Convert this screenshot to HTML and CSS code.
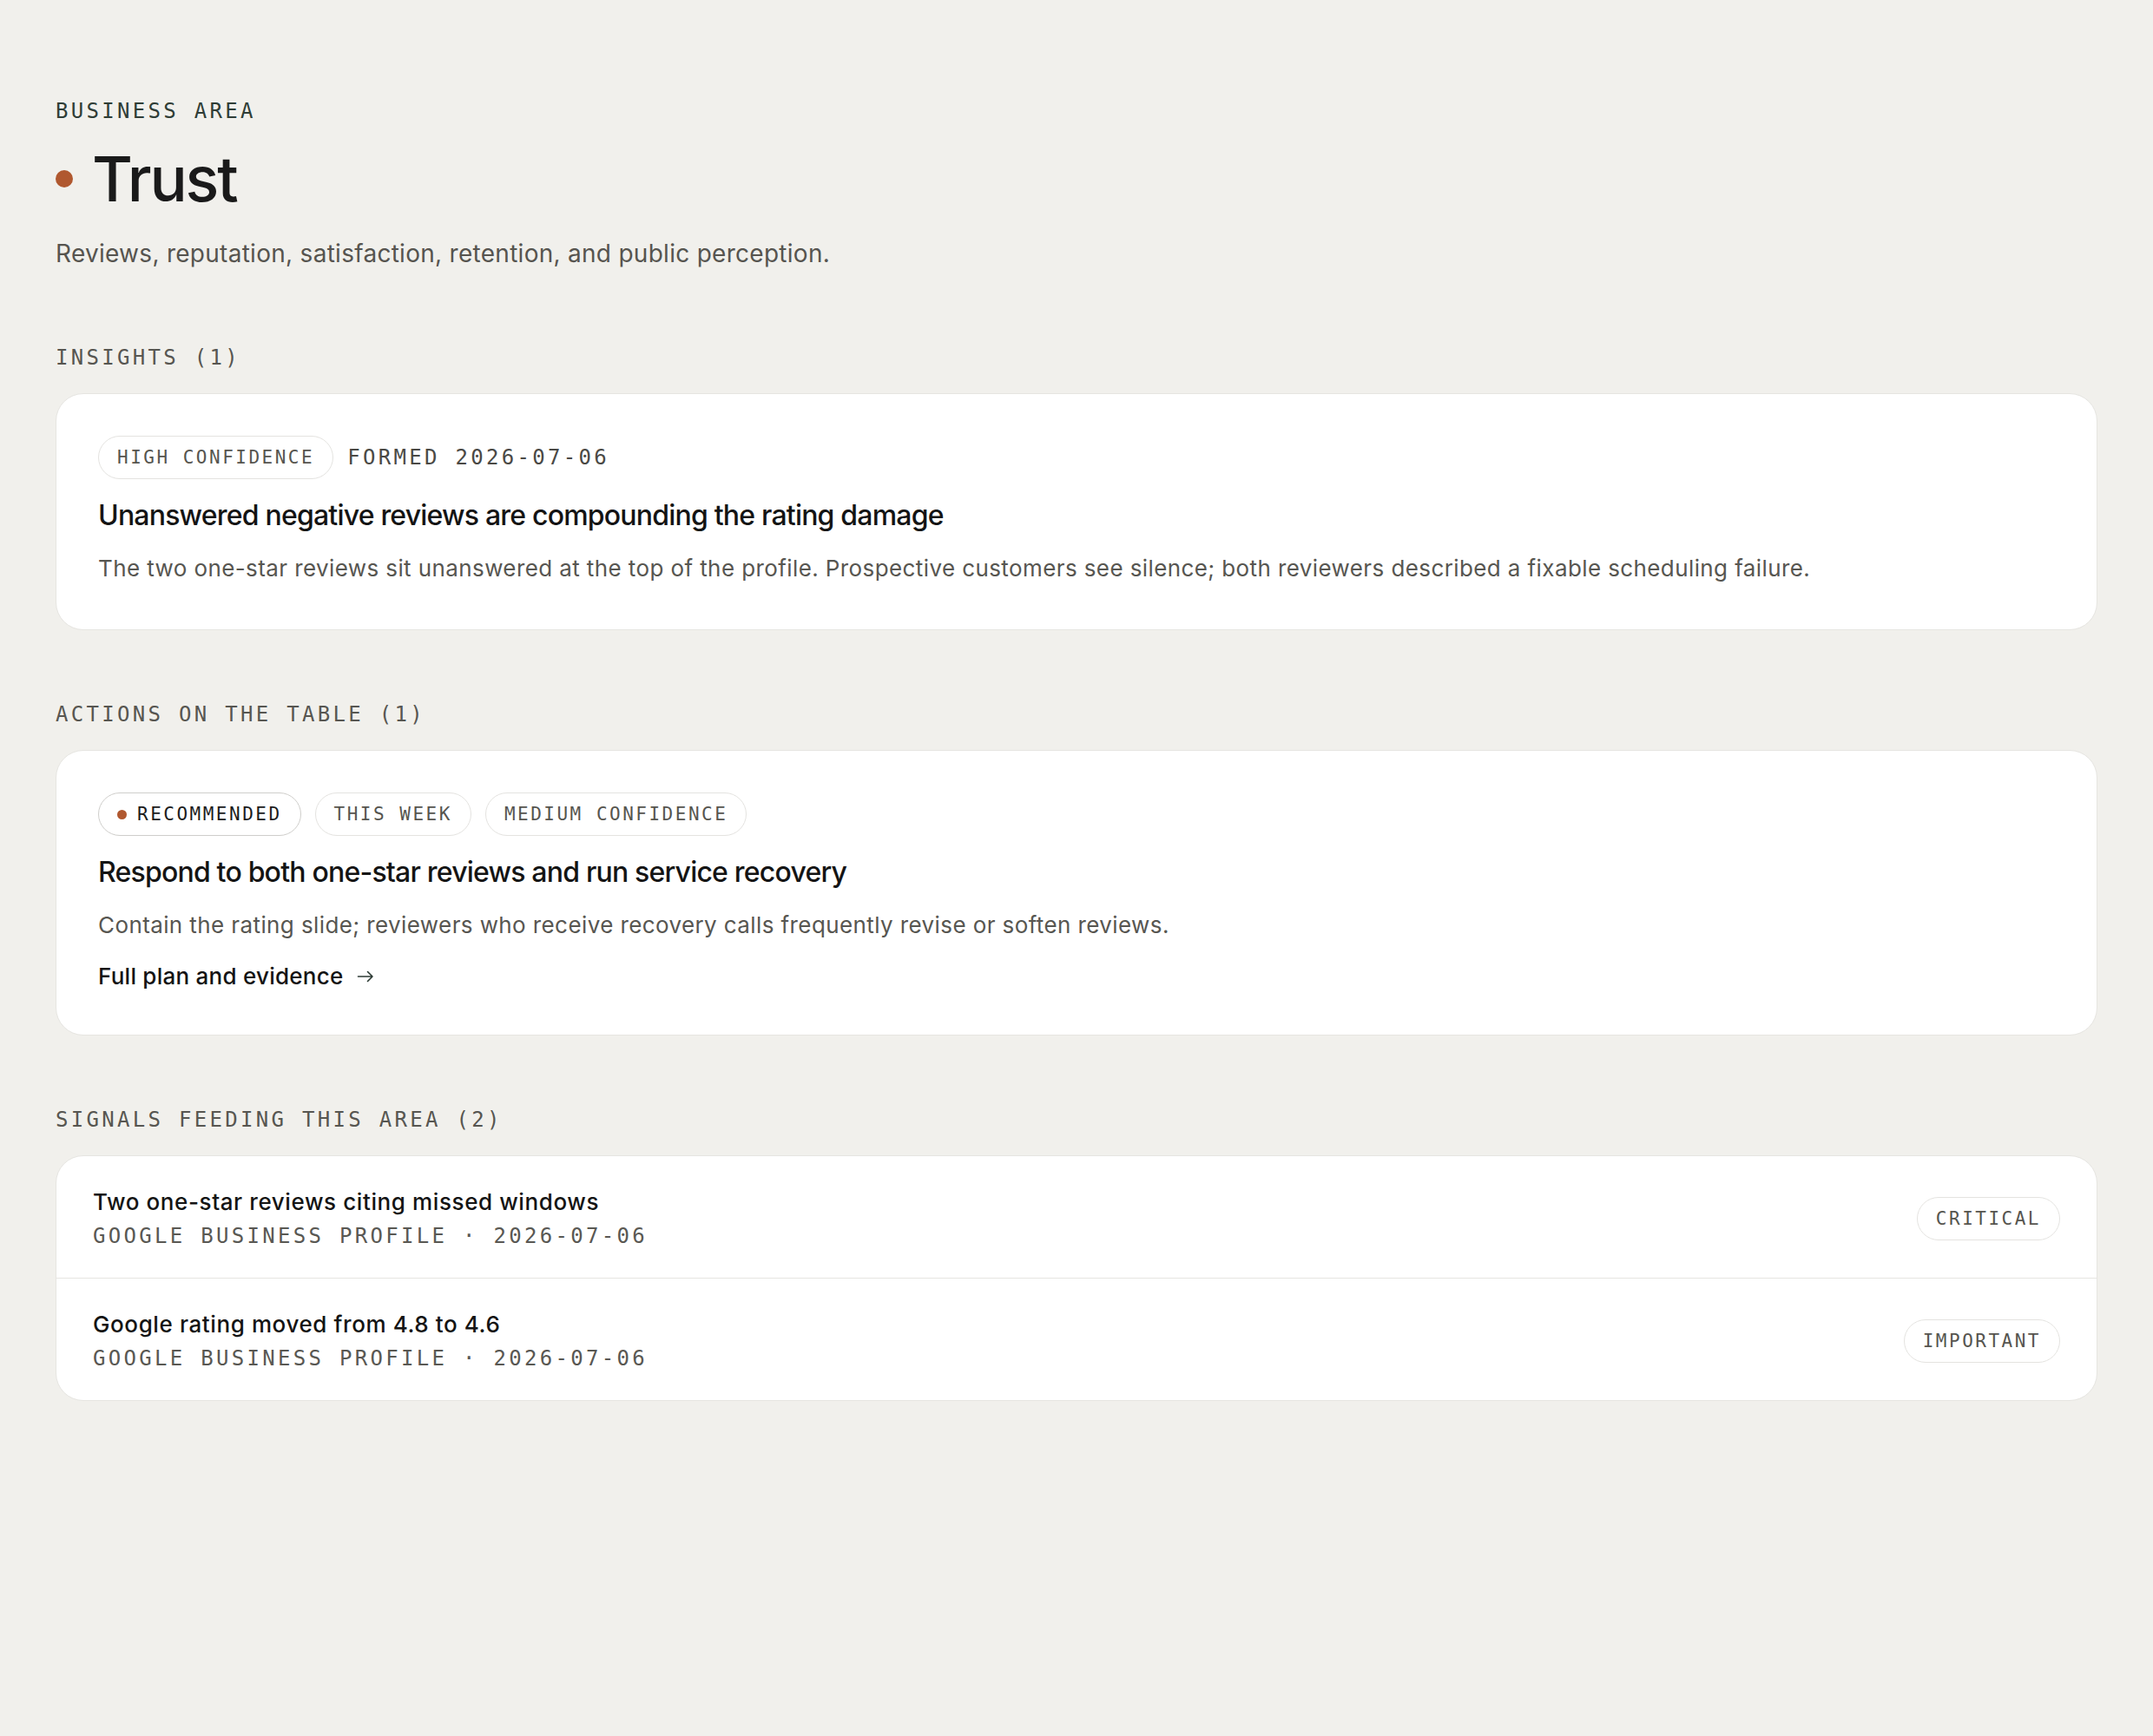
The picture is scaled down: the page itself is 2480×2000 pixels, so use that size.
FILE: index.html
```html
<!DOCTYPE html>
<html lang="en">
<head>
<meta charset="utf-8">
<title>Trust — Business Area</title>
<link rel="stylesheet" href="styles.css">
</head>
<body>
<main class="page">
  <header class="area-head">
    <div class="eyebrow">BUSINESS AREA</div>
    <h1 class="area-title"><span class="area-dot"></span>Trust</h1>
    <p class="area-desc">Reviews, reputation, satisfaction, retention, and public perception.</p>
  </header>

  <section class="section">
    <h2 class="section-label">INSIGHTS (1)</h2>
    <article class="card">
      <div class="chips">
        <span class="chip">HIGH CONFIDENCE</span>
        <span class="formed">FORMED 2026-07-06</span>
      </div>
      <h3 class="card-title">Unanswered negative reviews are compounding the rating damage</h3>
      <p class="card-body">The two one-star reviews sit unanswered at the top of the profile. Prospective customers see silence; both reviewers described a fixable scheduling failure.</p>
    </article>
  </section>

  <section class="section">
    <h2 class="section-label">ACTIONS ON THE TABLE (1)</h2>
    <article class="card">
      <div class="chips">
        <span class="chip chip-rec"><span class="chip-dot"></span>RECOMMENDED</span>
        <span class="chip">THIS WEEK</span>
        <span class="chip">MEDIUM CONFIDENCE</span>
      </div>
      <h3 class="card-title">Respond to both one-star reviews and run service recovery</h3>
      <p class="card-body">Contain the rating slide; reviewers who receive recovery calls frequently revise or soften reviews.</p>
      <a class="card-link" href="#">Full plan and evidence
        <svg class="arrow" width="20" height="20" viewBox="0 0 20 20" aria-hidden="true"><path d="M1.5 10h16.5M12.5 4.5l5.5 5.5-5.5 5.5" fill="none" stroke="currentColor" stroke-width="1.6" stroke-linecap="round" stroke-linejoin="round"/></svg>
      </a>
    </article>
  </section>

  <section class="section">
    <h2 class="section-label">SIGNALS FEEDING THIS AREA (2)</h2>
    <div class="card card-list">
      <div class="signal-row">
        <div class="signal-text">
          <div class="signal-title">Two one-star reviews citing missed windows</div>
          <div class="signal-meta">GOOGLE BUSINESS PROFILE · 2026-07-06</div>
        </div>
        <span class="chip">CRITICAL</span>
      </div>
      <div class="signal-row">
        <div class="signal-text">
          <div class="signal-title">Google rating moved from 4.8 to 4.6</div>
          <div class="signal-meta">GOOGLE BUSINESS PROFILE · 2026-07-06</div>
        </div>
        <span class="chip">IMPORTANT</span>
      </div>
    </div>
  </section>
</main>
</body>
</html>
```

FILE: styles.css
```css
* { box-sizing: border-box; }

html, body {
  margin: 0;
  padding: 0;
  background: #f1f0ec;
}

body {
  font-family: Inter, "Noto Sans", "Liberation Sans", sans-serif;
  color: #161616;
}

.page {
  padding: 112px 64px 64px;
}

.eyebrow,
.section-label,
.formed,
.signal-meta {
  font-family: "DejaVu Sans Mono", "Liberation Mono", monospace;
  font-size: 24px;
  line-height: 32px;
  letter-spacing: 3.3px;
  font-weight: 400;
}

.eyebrow {
  color: #2f3d36;
}

.area-title {
  margin: 22px 0 0;
  display: flex;
  align-items: center;
  gap: 22px;
  font-size: 72px;
  line-height: 80px;
  font-weight: 500;
  letter-spacing: -0.03em;
  color: #1a1a1a;
}

.area-dot {
  width: 20px;
  height: 20px;
  border-radius: 50%;
  background: #b0582f;
  flex: none;
}

.area-desc {
  margin: 26px 0 0;
  font-size: 28px;
  line-height: 40px;
  letter-spacing: 0.28px;
  color: #56544f;
}

.area-head {
  padding-bottom: 3px;
}

.section {
  margin-top: 81px;
}

.section-label {
  margin: 0 0 25px;
  color: #575651;
}

.card {
  background: #ffffff;
  border: 1px solid #e6e5e1;
  border-radius: 32px;
  padding: 48px;
}

.chips {
  display: flex;
  align-items: center;
  gap: 16px;
}

.chip {
  display: inline-flex;
  align-items: center;
  gap: 12px;
  height: 50px;
  padding: 0 21px;
  border: 1px solid #e4e3e0;
  border-radius: 999px;
  font-family: "DejaVu Sans Mono", "Liberation Mono", monospace;
  font-size: 21px;
  line-height: 24px;
  letter-spacing: 2.5px;
  color: #56554f;
  white-space: nowrap;
}

.chip-rec {
  border-color: #cfcecb;
  color: #1c1c1c;
}

.chip-dot {
  width: 11px;
  height: 11px;
  border-radius: 50%;
  background: #b0582f;
  flex: none;
}

.formed {
  color: #4a4945;
}

.card-title {
  margin: 22px 0 0;
  font-size: 32px;
  line-height: 40px;
  font-weight: 500;
  letter-spacing: -0.8px;
  color: #141414;
}

.card-body {
  margin: 19px 0 0;
  font-size: 26px;
  line-height: 44px;
  letter-spacing: 0.4px;
  color: #575651;
}

.card-link {
  margin-top: 18px;
  display: inline-flex;
  align-items: center;
  gap: 15px;
  font-size: 26px;
  line-height: 38px;
  font-weight: 500;
  letter-spacing: 0.25px;
  color: #141414;
  text-decoration: none;
}

.arrow {
  color: #2c3a34;
}

.card-list {
  padding: 0;
  overflow: hidden;
}

.signal-row {
  display: flex;
  align-items: center;
  justify-content: space-between;
  padding: 35px 42px 32px;
}

.signal-row + .signal-row {
  border-top: 1px solid #e6e5e1;
}

.signal-title {
  font-size: 26px;
  line-height: 36px;
  font-weight: 500;
  letter-spacing: 0.6px;
  color: #141414;
}

.signal-meta {
  margin-top: 5px;
  color: #595853;
}
```
